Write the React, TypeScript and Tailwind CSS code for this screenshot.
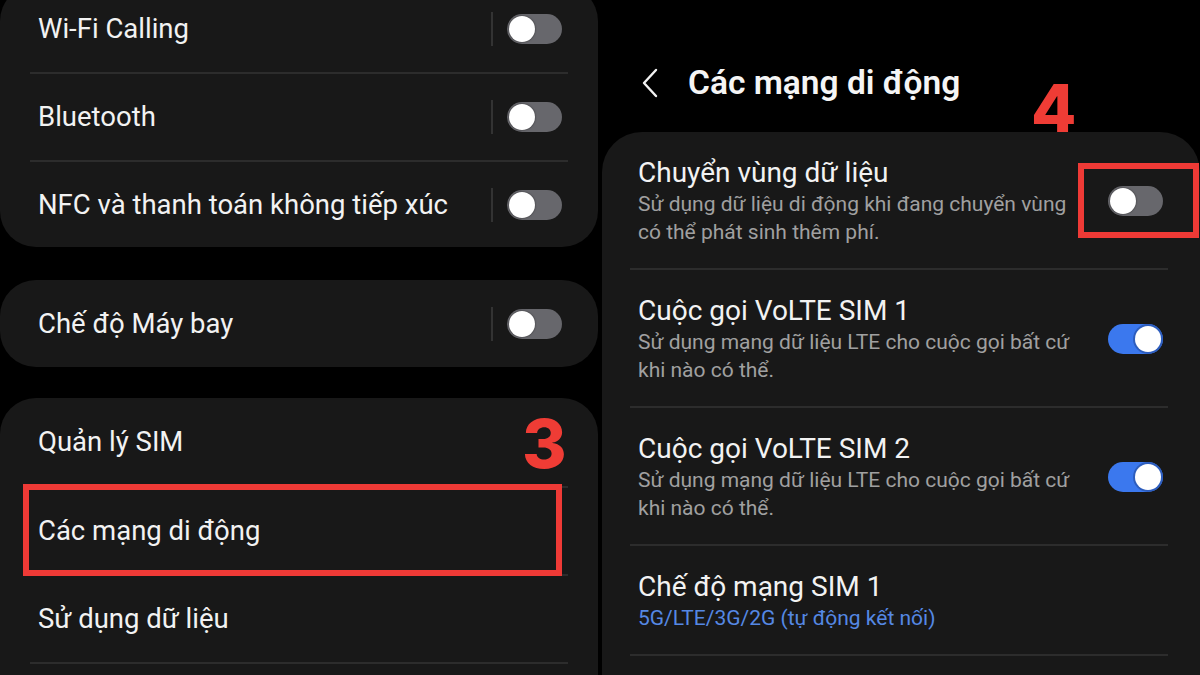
import type { ReactNode } from 'react';

// Samsung-style settings: two screens side by side with red step annotations.

function Toggle({ on }: { on?: boolean }) {
  if (on) {
    return (
      <div className="flex h-[30px] w-[55px] shrink-0 items-center justify-end rounded-full bg-[#3b78ee] px-[2px]">
        <div className="h-[26px] w-[26px] rounded-full bg-white ring-2 ring-[#2d5dbd]" />
      </div>
    );
  }
  return (
    <div className="flex h-[30px] w-[55px] shrink-0 items-center rounded-full bg-[#67676c] px-[2px]">
      <div className="h-[26px] w-[26px] rounded-full bg-white shadow-[0_0_2px_rgba(0,0,0,0.6)]" />
    </div>
  );
}

function Divider({ className = 'mx-[30px]' }: { className?: string }) {
  return <div className={`h-[2px] bg-[#2c2c2c] ${className}`} />;
}

function SwitchRow({ label, h }: { label: string; h: string }) {
  return (
    <div className={`flex items-center pl-[38px] pr-[36px] ${h}`}>
      <span className="flex-1 text-[27.5px] text-[#f2f2f2]">{label}</span>
      <span className="mr-[14px] h-[34px] w-[2px] bg-[#333]" />
      <Toggle />
    </div>
  );
}

function LinkRow({ label, h }: { label: string; h: string }) {
  return (
    <div className={`flex items-center pl-[38px] ${h}`}>
      <span className="text-[27.5px] text-[#f2f2f2]">{label}</span>
    </div>
  );
}

function DetailRow({
  title,
  lines,
  blue,
  toggle,
  children,
}: {
  title: string;
  lines: string[];
  blue?: boolean;
  toggle?: 'on' | 'off';
  children?: ReactNode;
}) {
  return (
    <div className="relative flex items-center pb-[22px] pl-[36px] pr-[37px] pt-[24px]">
      <div className="flex-1">
        <div className="text-[28px] leading-[34px] text-[#f2f2f2]">{title}</div>
        {lines.map((l) => (
          <div
            key={l}
            className={`whitespace-nowrap text-[21px] leading-[28px] ${blue ? 'text-[#5588e4]' : 'text-[#a0a0a0]'}`}
          >
            {l}
          </div>
        ))}
      </div>
      {toggle && <Toggle on={toggle === 'on'} />}
      {children}
    </div>
  );
}

export default function App() {
  return (
    <div className="flex h-[675px] w-[1200px] gap-[4px] overflow-hidden bg-black font-[Roboto,'Noto_Sans',sans-serif]">
      {/* Left screen */}
      <div className="flex w-[598px] shrink-0 flex-col">
        <div className="-mt-[15px] rounded-[36px] bg-[#181818]">
          <SwitchRow label="Wi-Fi Calling" h="h-[87px]" />
          <Divider />
          <SwitchRow label="Bluetooth" h="h-[86px]" />
          <Divider />
          <SwitchRow label="NFC và thanh toán không tiếp xúc" h="h-[85px]" />
        </div>

        <div className="mt-[33px] rounded-[36px] bg-[#181818]">
          <SwitchRow label="Chế độ Máy bay" h="h-[87px]" />
        </div>

        <div className="relative mt-[31px] flex-1 rounded-t-[36px] bg-[#181818]">
          <LinkRow label="Quản lý SIM" h="h-[88px]" />
          <Divider />
          <LinkRow label="Các mạng di động" h="h-[86px]" />
          <Divider />
          <LinkRow label="Sử dụng dữ liệu" h="h-[86px]" />
          <Divider />

          <span className="absolute left-[522px] top-[11px] font-[Inter,sans-serif] text-[68px] font-extrabold leading-none text-[#ef3c35]">
            3
          </span>
          <div className="absolute left-[23px] top-[86px] h-[92px] w-[539px] border-[6px] border-[#ef3a36]" />
        </div>
      </div>

      {/* Right screen */}
      <div className="relative flex flex-1 flex-col">
        <div className="flex h-[132px] items-start pl-[39px] pt-[63px]">
          <div className="flex h-[40px] items-center gap-[29px]">
            <svg width="18" height="30" viewBox="0 0 18 30" fill="none">
              <path d="M15 2 L3 15 L15 28" stroke="#f2f2f2" strokeWidth="2.4" strokeLinecap="round" strokeLinejoin="round" />
            </svg>
            <span className="text-[33.5px] font-semibold text-[#f5f5f5]">Các mạng di động</span>
          </div>
        </div>

        <span className="absolute left-[429px] top-[75px] font-[Inter,sans-serif] text-[66px] font-extrabold leading-none text-[#ef3c35]">
          4
        </span>

        <div className="flex-1 rounded-t-[40px] bg-[#181818]">
          <DetailRow
            title="Chuyển vùng dữ liệu"
            lines={['Sử dụng dữ liệu di động khi đang chuyển vùng', 'có thể phát sinh thêm phí.']}
            toggle="off"
          >
            <div className="absolute left-[476px] top-[31px] h-[75px] w-[121px] border-[6px] border-[#ef3a36]" />
          </DetailRow>
          <Divider className="ml-[28px] mr-[32px]" />
          <DetailRow
            title="Cuộc gọi VoLTE SIM 1"
            lines={['Sử dụng mạng dữ liệu LTE cho cuộc gọi bất cứ', 'khi nào có thể.']}
            toggle="on"
          />
          <Divider className="ml-[28px] mr-[32px]" />
          <DetailRow
            title="Cuộc gọi VoLTE SIM 2"
            lines={['Sử dụng mạng dữ liệu LTE cho cuộc gọi bất cứ', 'khi nào có thể.']}
            toggle="on"
          />
          <Divider className="ml-[28px] mr-[32px]" />
          <DetailRow title="Chế độ mạng SIM 1" lines={['5G/LTE/3G/2G (tự động kết nối)']} blue />
          <Divider className="ml-[28px] mr-[32px]" />
        </div>
      </div>
    </div>
  );
}
